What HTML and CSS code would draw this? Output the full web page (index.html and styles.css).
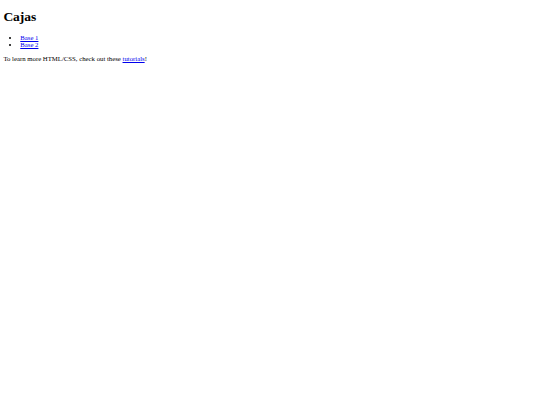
FILE: index.html
```html
<!DOCTYPE html>
<html lang="es">
<head>
<meta charset="utf-8">
<title>Cajas</title>
<link rel="stylesheet" href="styles.css">
</head>
<body class="page">
<h1 class="title">Cajas</h1>
<ul class="links">
  <li class="links-item"><a class="link" href="#base1">Base 1</a></li>
  <li class="links-item"><a class="link" href="#base2">Base 2</a></li>
</ul>
<p class="note">To learn more HTML/CSS, check out these <a class="link" href="#tutorials">tutorials</a>!</p>
</body>
</html>
```

FILE: styles.css
```css
html {
  background: #ffffff;
}
.page {
  margin: 3.375px;
  font-family: "Liberation Serif", "Times New Roman", serif;
  font-size: 6.75px;
  color: #000000;
}
.title {
  font-size: 13.5px;
  font-weight: bold;
  margin: 6px 0 9.045px;
}
.links {
  margin: 6.75px 0;
  padding-left: 16.875px;
  list-style: disc;
}
.note {
  margin: 6.75px 0;
}
.link {
  color: #0000ee;
  text-decoration: underline;
}
```
